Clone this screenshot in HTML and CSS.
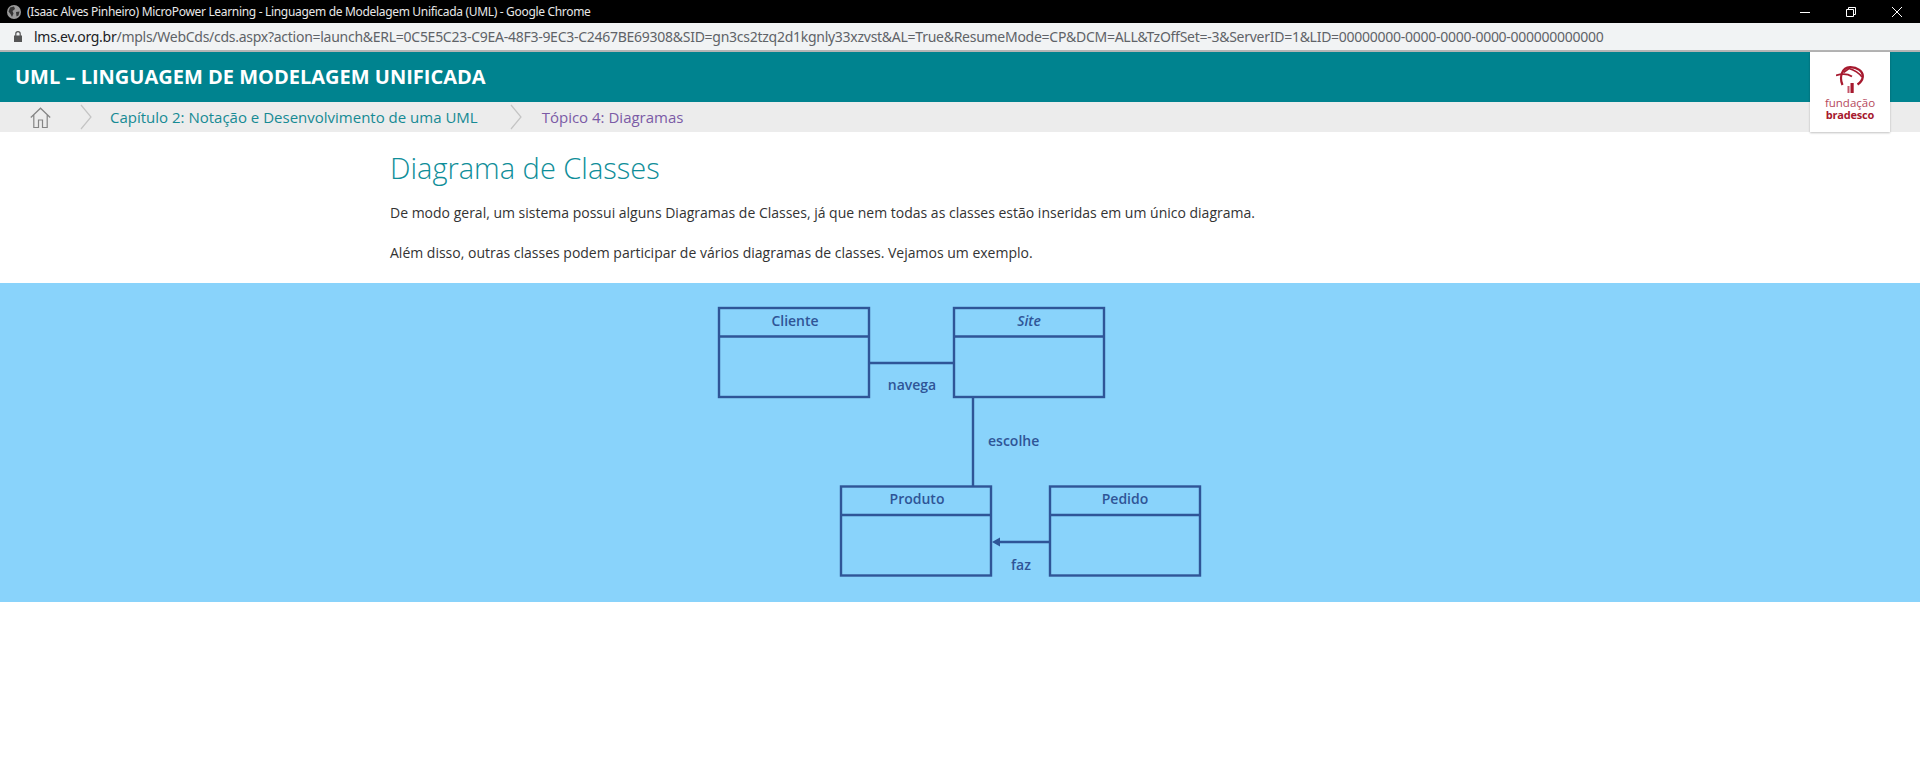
FILE: index.html
```html
<!DOCTYPE html>
<html lang="pt-BR">
<head>
<meta charset="utf-8">
<title>UML</title>
<link rel="stylesheet" href="styles.css">
</head>
<body>
<div class="titlebar">
  <svg class="globe" viewBox="0 0 14 14" width="14" height="14"><circle cx="7" cy="7" r="7" fill="#9a9a9a"/><path d="M3 2.5 L7 1.5 L8 4 L5.5 6 L6.5 8.5 L5 12 L3.5 9 L1.5 6.5Z M9 7 L12.5 6.5 L11.5 10.5 L9.5 11.5Z" fill="#333"/></svg>
  <span class="title-text">(Isaac Alves Pinheiro) MicroPower Learning - Linguagem de Modelagem Unificada (UML) - Google Chrome</span>
  <div class="win-controls">
    <svg viewBox="0 0 10 10" width="10" height="10"><path d="M0 5.5H10" stroke="#fff" stroke-width="1"/></svg>
    <svg viewBox="0 0 10 10" width="10" height="10"><path d="M.5 2.5H7.5V9.5H.5Z M2.5 2.5V.5H9.5V7.5H7.5" fill="none" stroke="#fff" stroke-width="1"/></svg>
    <svg viewBox="0 0 10 10" width="10" height="10"><path d="M0 0L10 10M10 0L0 10" stroke="#fff" stroke-width="1"/></svg>
  </div>
</div>
<div class="addressbar">
  <svg class="lock" viewBox="0 0 8 11" width="8" height="11"><path d="M1.8 5V2.8a2.2 2.2 0 0 1 4.4 0V5" fill="none" stroke="#555" stroke-width="1.2"/><rect x="0" y="4.5" width="8" height="6.5" fill="#555"/></svg>
  <span class="url"><span class="host">lms.ev.org.br</span>/mpls/WebCds/cds.aspx?action=launch&amp;ERL=0C5E5C23-C9EA-48F3-9EC3-C2467BE69308&amp;SID=gn3cs2tzq2d1kgnly33xzvst&amp;AL=True&amp;ResumeMode=CP&amp;DCM=ALL&amp;TzOffSet=-3&amp;ServerID=1&amp;LID=00000000-0000-0000-0000-000000000000</span>
</div>
<header class="course-header">
  <h1 class="course-title">UML – LINGUAGEM DE MODELAGEM UNIFICADA</h1>
  <div class="logo-card">
    <svg class="logo-mark" viewBox="0 0 28 27" width="28" height="27">
      <g fill="none" stroke="#a6192e">
        <path d="M6.5 19 C3 11 6 1.5 14 1.2 C21 1 27.5 5.5 26.8 11 C26.4 14.5 24 16.8 21.5 18.5" stroke-width="2.2"/>
        <path d="M0 9.5 C6 7.5 12 8 16 10.5" stroke-width="1.8"/>
        <path d="M7.5 6.5 L13 2.5 C18 4 23 7 26 11" stroke-width="1.6"/>
      </g>
      <rect x="11.5" y="20" width="2" height="7" fill="#c5566a"/>
      <rect x="14.5" y="17" width="3.2" height="10" fill="#a6192e"/>
    </svg>
    <span class="logo-top">fundação</span>
    <span class="logo-bottom">bradesco</span>
  </div>
</header>
<nav class="breadcrumb">
  <svg class="home" viewBox="0 0 21 21" width="21" height="21"><path d="M.8 10.5 L10.5 1.2 L20.2 10.5 M3.8 8V20.5H8.5V13H12.5V20.5H17.2V8" fill="none" stroke="#858585" stroke-width="1.2"/></svg>
  <svg class="chev first" viewBox="0 0 12 26" width="12" height="26"><path d="M1 1L11 13L1 25" fill="none" stroke="#c4c4c4" stroke-width="1.2"/></svg>
  <span class="crumb chapter">Capítulo 2: Notação e Desenvolvimento de uma UML</span>
  <svg class="chev" viewBox="0 0 12 26" width="12" height="26"><path d="M1 1L11 13L1 25" fill="none" stroke="#c4c4c4" stroke-width="1.2"/></svg>
  <span class="crumb topic">Tópico 4: Diagramas</span>
</nav>
<main>
  <section class="intro">
    <h2 class="heading">Diagrama de Classes</h2>
    <p>De modo geral, um sistema possui alguns Diagramas de Classes, já que nem todas as classes estão inseridas em um único diagrama.</p>
    <p>Além disso, outras classes podem participar de vários diagramas de classes. Vejamos um exemplo.</p>
  </section>
  <section class="band">
    <svg class="diagram" viewBox="0 0 500 319" width="500" height="319">
      <g class="shapes">
        <rect x="9" y="25" width="150" height="89"/><path d="M9 53.5H159"/>
        <rect x="244" y="25" width="150" height="89"/><path d="M244 53.5H394"/>
        <rect x="131" y="203.5" width="150" height="89"/><path d="M131 232H281"/>
        <rect x="340" y="203.5" width="150" height="89"/><path d="M340 232H490"/>
        <path d="M159 80H244"/>
        <path d="M263 114V203.5"/>
        <path d="M340 259H288"/>
      </g>
      <path class="arrowhead" d="M282 259L290 254.5V263.5Z"/>
      <text x="85" y="43" class="name">Cliente</text>
      <text x="319" y="43" class="name italic">Site</text>
      <text x="207" y="221" class="name">Produto</text>
      <text x="415" y="221" class="name">Pedido</text>
      <text x="202" y="107" class="name">navega</text>
      <text x="278" y="163" class="label">escolhe</text>
      <text x="311" y="287" class="name">faz</text>
    </svg>
  </section>
</main>
</body>
</html>
```
FILE: styles.css
```css
* { box-sizing: border-box; }
html, body { margin: 0; padding: 0; }
body { width: 1920px; height: 783px; overflow: hidden; background: #fff; font-family: "Open Sans", sans-serif; }

.titlebar { height: 23px; background: #000; color: #fff; display: flex; align-items: center; padding-left: 7px; }
.title-text { margin-left: 6px; font-size: 12px; font-family: "Noto Sans", sans-serif; letter-spacing: -0.32px; white-space: nowrap; color: #e8e8e8; }
.win-controls { margin-left: auto; display: flex; gap: 36px; align-items: center; padding-right: 18px; }
.win-controls svg { display: block; }

.addressbar { height: 29px; background: #f1f3f4; border-bottom: 2px solid #b4b4b4; display: flex; align-items: center; padding-left: 14px; }
.lock { flex: none; }
.url { margin-left: 12px; font-size: 14px; font-family: "Noto Sans", sans-serif; color: #5f6368; white-space: nowrap; letter-spacing: -0.268px; }
.host { color: #202124; }

.course-header { height: 50px; background: #00838f; display: flex; align-items: center; padding: 0 0 2px 15px; position: relative; }
.course-title { margin: 0; font-size: 20px; font-weight: 700; color: #fff; white-space: nowrap; }
.logo-card { position: absolute; left: 1810px; top: 0; width: 80px; height: 80px; background: #fff; box-shadow: 0 1px 2px rgba(0,0,0,.25); display: flex; flex-direction: column; align-items: center; z-index: 2; padding-top: 14px; }
.logo-mark { display: block; flex: none; }
.logo-top { font-size: 11.5px; line-height: 13px; color: #b5485c; margin-top: 3px; }
.logo-bottom { font-size: 11px; line-height: 12px; font-weight: 700; color: #a6192e; letter-spacing: -0.2px; }

.breadcrumb { height: 30px; background: #ececec; display: flex; align-items: center; padding-left: 30px; }
.home { flex: none; }
.chev { flex: none; margin-left: 29px; }
.crumb { font-size: 15px; white-space: nowrap; }
.chapter { color: #168a94; margin-left: 18px; }
.topic { color: #7b5ba6; margin-left: 20px; }
.chev:not(.first) { margin-left: 32px; }

.intro { padding: 17px 0 0 390px; height: 151px; }
.heading { margin: 0 0 16px; font-size: 29px; line-height: 38px; font-weight: 300; color: #0f8e99; }
.intro p { margin: 0 0 21px; font-size: 14px; line-height: 19px; color: #333; }

.band { height: 319px; background: #89d3fb; display: flex; justify-content: center; }
.diagram { display: block; }
.shapes rect, .shapes path { fill: none; stroke: #2f5597; stroke-width: 2.4; }
.arrowhead { fill: #2f5597; }
.diagram text { font-family: "Open Sans", sans-serif; font-size: 14px; font-weight: 600; fill: #2f5597; }
.diagram .name { text-anchor: middle; }
.diagram .italic { font-style: italic; }
```
